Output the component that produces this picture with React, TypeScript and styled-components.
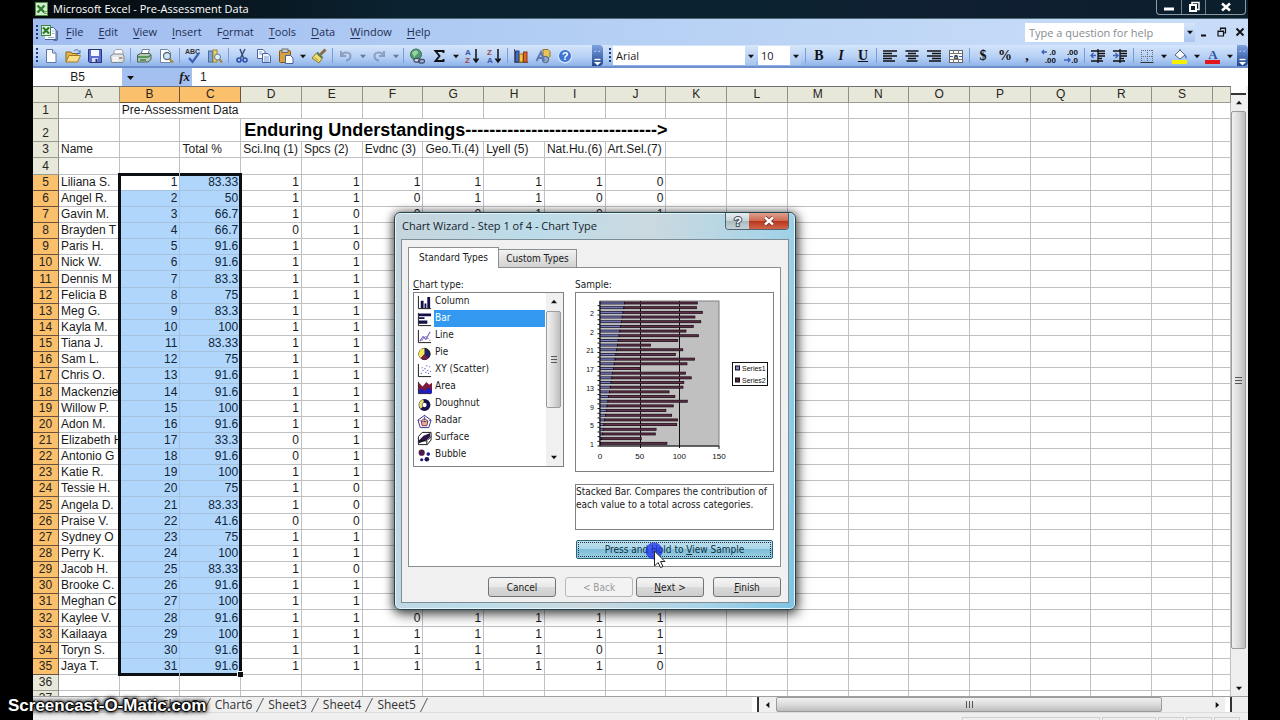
import React from "react";
import styled, { createGlobalStyle, css } from "styled-components";

const UI = `"Open Sans", "Noto Sans", sans-serif`;
const DIALOG = `"DejaVu Sans Condensed", "DejaVu Sans", sans-serif`;
const ARIAL = `"Liberation Sans", Arial, sans-serif`;

const GlobalStyle = createGlobalStyle`
  * { box-sizing: border-box; }
  html, body { margin: 0; background: #000; }
  body { font-family: ${UI}; font-size: 11px; color: #1a1a1a; overflow: hidden; }
  button, input, select { font: inherit; color: inherit; margin: 0; padding: 0; border: 0; border-radius: 0; background: none; }
`;

/* ---------- data ---------- */

type Student = { name: string; total: string; marks: string };

const students: Student[] = [
  { name: "Liliana S.", total: "83.33", marks: "1111110" },
  { name: "Angel R.", total: "50", marks: "1101100" },
  { name: "Gavin M.", total: "66.7", marks: "1000101" },
  { name: "Brayden T", total: "66.7", marks: "01" },
  { name: "Paris H.", total: "91.6", marks: "10" },
  { name: "Nick W.", total: "91.6", marks: "11" },
  { name: "Dennis M", total: "83.3", marks: "11" },
  { name: "Felicia B", total: "75", marks: "11" },
  { name: "Meg G.", total: "83.3", marks: "11" },
  { name: "Kayla M.", total: "100", marks: "11" },
  { name: "Tiana J.", total: "83.33", marks: "11" },
  { name: "Sam L.", total: "75", marks: "11" },
  { name: "Chris O.", total: "91.6", marks: "11" },
  { name: "Mackenzie", total: "91.6", marks: "11" },
  { name: "Willow P.", total: "100", marks: "11" },
  { name: "Adon M.", total: "91.6", marks: "11" },
  { name: "Elizabeth H", total: "33.3", marks: "01" },
  { name: "Antonio G", total: "91.6", marks: "01" },
  { name: "Katie R.", total: "100", marks: "11" },
  { name: "Tessie H.", total: "75", marks: "10" },
  { name: "Angela D.", total: "83.33", marks: "10" },
  { name: "Praise V.", total: "41.6", marks: "00" },
  { name: "Sydney O", total: "75", marks: "11" },
  { name: "Perry K.", total: "100", marks: "11" },
  { name: "Jacob H.", total: "83.33", marks: "10" },
  { name: "Brooke C.", total: "91.6", marks: "11" },
  { name: "Meghan C", total: "100", marks: "11" },
  { name: "Kaylee V.", total: "91.6", marks: "1101111" },
  { name: "Kailaaya", total: "100", marks: "1111111" },
  { name: "Toryn S.", total: "91.6", marks: "1111101" },
  { name: "Jaya T.", total: "91.6", marks: "1111110" },
];

const columns = "ABCDEFGHIJKLMNOPQRS".split("");
const understandings = ["Sci.Inq (1)", "Spcs (2)", "Evdnc (3)", "Geo.Ti.(4)", "Lyell (5)", "Nat.Hu.(6)", "Art.Sel.(7)"];

/* ---------- window frame ---------- */

const Window = styled.div`
  position: relative;
  margin: 0 32px 0 33px;
  height: 100vh;
  display: flex;
  flex-direction: column;
  background: #fff;
`;

const TitleBar = styled.header`
  height: 19px;
  flex: none;
  display: flex;
  align-items: center;
  gap: 5px;
  padding-left: 2px;
  background: linear-gradient(90deg, #05090c, #0b2230 30%, #0b2230 60%, #101f33 75%, #0a1e2b);
  border-bottom: 1px solid #4f6a72;
`;

const Title = styled.h1`
  margin: 0;
  flex: 1;
  font-size: 11px;
  line-height: 16px;
  font-weight: 400;
  color: #fff;
  white-space: nowrap;
`;

const Captions = styled.div`
  display: flex;
  align-self: flex-start;
  height: 15px;
  margin-right: 2px;
  border: 1px solid #8b9aa3;
  border-top: 0;
  border-radius: 0 0 4px 4px;
`;

const Caption = styled.button<{ $wide?: boolean }>`
  width: ${(p) => (p.$wide ? 40 : 24)}px;
  display: grid;
  place-items: center;
  & + & { border-left: 1px solid #6f7f88; }
`;

const MenuBar = styled.nav`
  height: 26px;
  flex: none;
  display: flex;
  align-items: center;
  background: linear-gradient(90deg, #a2bdf0, #b2cdf3 40%, #bfd7f6 70%, #c9ddf9);
`;

const Grip = styled.span`
  flex: none;
  width: 2px;
  height: 15px;
  margin: 0 2px 0 3px;
  background: repeating-linear-gradient(#1f3a78 0 2px, transparent 2px 4px);
`;

const Menus = styled.div`
  flex: 1;
  display: flex;
  gap: 15px;
  margin-left: 8px;
`;

const MenuItem = styled.button`
  line-height: 18px;
  color: #1d2f55;
  u { text-underline-offset: 2px; }
`;

const HelpBox = styled.div`
  display: flex;
  width: 170px;
  height: 19px;
  background: #fff;
  input { flex: 1; min-width: 0; padding-left: 4px; }
  input::placeholder { color: #868b92; opacity: 1; }
`;

const DropButton = styled.button<{ $w?: number }>`
  flex: none;
  width: ${(p) => p.$w ?? 11}px;
  align-self: stretch;
  display: grid;
  place-items: center;
  background: linear-gradient(#d6e5fb, #a9c6ef);
`;

const ChildCaptions = styled.div`
  display: flex;
  gap: 1px;
  button { width: 17px; height: 16px; display: grid; place-items: center; }
`;

/* ---------- toolbars ---------- */

const Toolbars = styled.div`
  height: 23px;
  flex: none;
  display: flex;
  background: linear-gradient(#d5e5fb, #b4cff5 60%, #8fb3ea);
  border-bottom: 2px solid #6d8fcb;
`;

const Toolbar = styled.div<{ $grow?: boolean }>`
  display: flex;
  align-items: center;
  ${(p) => p.$grow && css`flex: 1;`}
`;

const Tool = styled.button<{ $faded?: boolean }>`
  flex: none;
  width: 22px;
  height: 20px;
  display: grid;
  place-items: center;
  opacity: ${(p) => (p.$faded ? 0.45 : 1)};
`;

const ToolArrow = styled.button<{ $faded?: boolean }>`
  flex: none;
  width: 11px;
  height: 20px;
  display: grid;
  place-items: center;
  opacity: ${(p) => (p.$faded ? 0.45 : 1)};
`;

const Divider = styled.span`
  flex: none;
  width: 1px;
  height: 15px;
  margin: 0 2px;
  background: #7c9bd3;
`;

const Overflow = styled.button`
  flex: none;
  width: 11px;
  align-self: stretch;
  display: grid;
  place-items: end center;
  background: linear-gradient(#7ea3e2, #1f478f);
  border-radius: 0 4px 4px 0;
`;

const Spacer = styled.span<{ $w?: number }>`
  ${(p) => (p.$w ? css`flex: none; width: ${p.$w}px;` : css`flex: 1;`)}
`;

const Combo = styled.div<{ $w: number }>`
  flex: none;
  display: flex;
  width: ${(p) => p.$w}px;
  height: 19px;
  margin-right: 2px;
  background: #fff;
  select { flex: 1; min-width: 0; appearance: none; padding-left: 3px; }
`;

const Glyph = styled.span<{ $italic?: boolean; $line?: boolean }>`
  font-family: "Liberation Serif", serif;
  font-weight: 700;
  font-size: 14px;
  line-height: 16px;
  font-style: ${(p) => (p.$italic ? "italic" : "normal")};
  text-decoration: ${(p) => (p.$line ? "underline" : "none")};
  color: #111;
`;

/* ---------- formula bar ---------- */

const FormulaBar = styled.div`
  height: 18px;
  flex: none;
  display: flex;
  font-family: ${ARIAL};
  font-size: 12px;
  background: #a3c0f0;
  input { background: #fff; }
`;

const NameBox = styled.input`
  width: 89px;
  text-align: center;
`;

const FormulaTools = styled.div`
  width: 70px;
  display: flex;
  justify-content: space-between;
  align-items: center;
  padding: 0 2px 0 5px;
  button { height: 16px; }
`;

const Fx = styled.button`
  font-family: "Liberation Serif", serif;
  font-style: italic;
  font-weight: 700;
  font-size: 13px;
  line-height: 16px;
`;

const FormulaInput = styled.input`
  flex: 1;
  padding-left: 8px;
`;

/* ---------- sheet ---------- */

const Workspace = styled.main`
  flex: 1;
  min-height: 0;
  display: flex;
  background: #efefef;
`;

const SheetView = styled.div`
  flex: 1;
  min-width: 0;
  overflow: hidden;
  background: #fff;
`;

const Grid = styled.table`
  width: 100%;
  table-layout: fixed;
  border-collapse: separate;
  border-spacing: 0;
  border-top: 1px solid #6f7276;
  font-family: ${ARIAL};
  font-size: 12px;
  tbody tr { height: 16px; }
  tbody tr:nth-child(7n + 4) { height: 17px; }
  tbody tr:nth-child(2) { height: 23px; }
`;

const heading = css<{ $on?: boolean }>`
  padding: 0;
  font-weight: 400;
  text-align: center;
  line-height: 15px;
  color: #26241c;
  background: ${(p) => (p.$on ? "#fac06c" : "#e7e8da")};
  border-right: 1px solid ${(p) => (p.$on ? "#6b5340" : "#8e9187")};
  border-bottom: 1px solid ${(p) => (p.$on ? "#6b5340" : "#9a9c92")};
`;

const ColHead = styled.th<{ $on?: boolean }>`
  ${heading}
  height: 16px;
`;

const RowHead = styled.th<{ $on?: boolean }>`
  ${heading}
  vertical-align: bottom;
`;

type CellProps = { $right?: boolean; $sel?: boolean; $left?: boolean; $end?: boolean; $top?: boolean; $bottom?: boolean; $active?: boolean; $clip?: boolean };

const Cell = styled.td<CellProps>`
  position: relative;
  padding: 0 2px;
  line-height: 15px;
  vertical-align: bottom;
  white-space: nowrap;
  overflow: ${(p) => (p.$clip ? "hidden" : "visible")};
  text-align: ${(p) => (p.$right ? "right" : "left")};
  border-right: 1px solid #bfc0c2;
  border-bottom: 1px solid #bfc0c2;
  ${(p) =>
    p.$sel &&
    css`
      color: #10243a;
      background: ${p.$active ? "#fff" : "#b0d7fb"};
      border-color: #a5c3de;
      &::after {
        content: "";
        position: absolute;
        z-index: 1;
        inset: ${p.$top ? -2 : 0}px ${p.$end ? -2 : 0}px ${p.$bottom ? -2 : -1}px ${p.$left ? -2 : 0}px;
        border: 0 solid #0c0f14;
        border-left-width: ${p.$left ? 3 : 0}px;
        border-right-width: ${p.$end ? 3 : 0}px;
        border-top-width: ${p.$top ? 3 : 0}px;
        border-bottom-width: ${p.$bottom ? 3 : 0}px;
      }
    `}
  ${(p) =>
    p.$sel && p.$end && p.$bottom &&
    css`
      &::before {
        content: "";
        position: absolute;
        z-index: 2;
        right: -3px;
        bottom: -3px;
        width: 5px;
        height: 5px;
        background: #0c0f14;
        border: solid #fff;
        border-width: 1px 0 0 1px;
      }
    `}
`;

const BigCell = styled(Cell)`
  font-size: 18px;
  line-height: 22px;
  font-weight: 700;
  color: #000;
  padding-left: 3px;
`;

/* ---------- scroll bars and sheet tabs ---------- */

const VScroll = styled.div`
  flex: none;
  width: 17px;
  display: flex;
  flex-direction: column;
  align-items: stretch;
  padding-right: 2px;
  background: #efefef;
`;

const Split = styled.span<{ $vertical?: boolean }>`
  flex: none;
  background: #fff;
  ${(p) =>
    p.$vertical
      ? css`width: 7px; align-self: stretch; border-right: 2px solid #333;`
      : css`height: 9px; border-bottom: 2px solid #333;`}
`;

const ScrollButton = styled.button<{ $w?: number; $h?: number }>`
  flex: none;
  display: grid;
  place-items: center;
  width: ${(p) => (p.$w ? `${p.$w}px` : "auto")};
  height: ${(p) => (p.$h ? `${p.$h}px` : "auto")};
`;

const Thumb = styled.div<{ $vertical?: boolean; $grow: number }>`
  flex: ${(p) => p.$grow};
  display: grid;
  place-items: center;
  border: 1px solid #9b9b9b;
  border-radius: 2px;
  background: linear-gradient(${(p) => (p.$vertical ? "90deg" : "180deg")}, #f1f1f1, #dcdcdc 50%, #bdbdbd);
`;

const TrackRest = styled.span<{ $grow: number }>`
  flex: ${(p) => p.$grow};
`;

const TabStrip = styled.footer`
  height: 16px;
  flex: none;
  display: flex;
  background: #efefef;
  border-top: 1px solid #a0a0a0;
`;

const SheetTabs = styled.div`
  flex: 1;
  display: flex;
  align-items: center;
  padding-left: 128px;
  button { font-size: 12px; line-height: 14px; color: #333; white-space: nowrap; }
  svg { flex: none; margin: 0 4px; }
`;

const HScroll = styled.div`
  flex: none;
  width: 480px;
  display: flex;
  align-items: stretch;
  margin-right: 16px;
`;

const StatusBar = styled.div`
  height: 8px;
  flex: none;
  display: flex;
  justify-content: flex-end;
  gap: 2px;
  padding: 4px 8px 0 0;
  background: #efefef;
  border-top: 1px solid #dcdcdc;
`;

const Pane = styled.span<{ $w: number }>`
  width: ${(p) => p.$w}px;
  border: 1px solid #cfcfcf;
  border-bottom: 0;
`;

const Watermark = styled.div`
  position: absolute;
  left: 8px;
  bottom: 4px;
  font-family: ${ARIAL};
  font-size: 17px;
  line-height: 20px;
  font-weight: 700;
  color: #fff;
  text-shadow: 1px 0 1px #000, -1px 0 1px #000, 0 1px 1px #000, 0 -1px 1px #000, 0 0 4px #000, 0 0 4px #000, 0 0 6px #000;
`;

/* ---------- dialog ---------- */

const Dialog = styled.section`
  position: absolute;
  left: 361px;
  top: 212px;
  z-index: 2;
  width: 402px;
  padding: 0 6px 6px;
  border: 1px solid #23454f;
  border-radius: 6px;
  background: linear-gradient(100deg, #c6d5dc, #bcdcea 30%, #cbd9df 55%, #a9d4e8 80%, #7fc4e2);
  box-shadow: inset 0 0 0 1px #e6f3f8, 0 1px 10px 1px rgba(0, 0, 0, 0.6), 2px 5px 14px rgba(0, 0, 0, 0.4);
  font-family: ${DIALOG};
  font-size: 10px;
`;

const DialogTitle = styled.header`
  display: flex;
  height: 26px;
  h2 { flex: 1; margin: 0; padding-left: 1px; font-family: ${UI}; font-size: 11px; line-height: 26px; font-weight: 400; color: #16222a; }
`;

const DialogButtons = styled.div`
  display: flex;
  height: 17px;
  border: 1px solid #50636c;
  border-top: 0;
  border-radius: 0 0 4px 4px;
  overflow: hidden;
`;

const DialogCaption = styled.button<{ $close?: boolean }>`
  width: ${(p) => (p.$close ? 39 : 23)}px;
  display: grid;
  place-items: center;
  background: ${(p) => (p.$close ? "linear-gradient(#e0a090, #cf6a52 48%, #b8331c 50%, #d0664a)" : "linear-gradient(#e6eef1, #c7d3d9 48%, #a9b9c1 50%, #c4d3da)")};
`;

const DialogBody = styled.div`
  padding: 7px 7px 5px 6px;
  border: 1px solid #7d8d95;
  background: #f0f0f0;
`;

const Tabs = styled.div`
  display: flex;
  align-items: flex-end;
`;

const TabButton = styled.button<{ $on?: boolean }>`
  position: relative;
  z-index: ${(p) => (p.$on ? 1 : 0)};
  width: ${(p) => (p.$on ? 91 : 78)}px;
  height: ${(p) => (p.$on ? 21 : 18)}px;
  margin-bottom: ${(p) => (p.$on ? -1 : 0)}px;
  line-height: 16px;
  border: 1px solid #8a8f94;
  border-bottom: 0;
  border-left-width: ${(p) => (p.$on ? 1 : 0)}px;
  background: ${(p) => (p.$on ? "#fff" : "linear-gradient(#f2f2f2, #d2d2d2)")};
  white-space: nowrap;
`;

const TabPanel = styled.div`
  display: flex;
  gap: 11px;
  height: 300px;
  padding: 9px 6px 6px 4px;
  border: 1px solid #8a8f94;
  background: #fff;
`;

const LeftPane = styled.div`
  flex: none;
  width: 151px;
`;

const RightPane = styled.div`
  flex: 1;
  min-width: 0;
  display: flex;
  flex-direction: column;
`;

const FieldLabel = styled.div`
  height: 15px;
  line-height: 15px;
  white-space: nowrap;
`;

const TypeList = styled.div`
  display: flex;
  height: 175px;
  border: 1px solid #7f8184;
`;

const Types = styled.div`
  flex: 1;
  display: flex;
  flex-direction: column;
  overflow: hidden;
`;

const TypeRow = styled.label<{ $on?: boolean }>`
  flex: none;
  display: flex;
  align-items: flex-end;
  height: 17px;
  padding: 0 1px 0 3px;
  input { position: absolute; opacity: 0; pointer-events: none; }
  span {
    flex: 1;
    margin-left: 2px;
    padding-left: 1px;
    height: 17px;
    line-height: 15px;
    color: ${(p) => (p.$on ? "#fff" : "#1a1a1a")};
    background: ${(p) => (p.$on ? "#3399f0" : "transparent")};
  }
`;

const ListScroll = styled.div`
  width: 17px;
  display: flex;
  flex-direction: column;
  padding-right: 2px;
  background: #f0f0f0;
`;

const SampleBox = styled.div`
  height: 180px;
  border: 1px solid #7f8184;
  svg { display: block; }
`;

const Description = styled.p`
  height: 46px;
  margin: 12px 0 10px;
  line-height: 13px;
  border: 1px solid #7f8184;
  white-space: nowrap;
`;

const HoldButton = styled.button`
  height: 19px;
  margin: 0 1px;
  line-height: 17px;
  border: 1px solid #2f6378;
  border-radius: 2px;
  outline: 1px dotted #234;
  outline-offset: -3px;
  background: linear-gradient(#c3e2ef, #a6d5e8 48%, #7ebdd8 50%, #9bd0e4);
  color: #12303c;
  white-space: nowrap;
`;

const Actions = styled.div`
  display: flex;
  justify-content: flex-end;
  gap: 9px;
  margin-top: 10px;
`;

const StepPair = styled.div`
  display: flex;
  gap: 3px;
`;

const Push = styled.button`
  width: 68px;
  height: 20px;
  line-height: 17px;
  border: 1px solid #70757a;
  border-radius: 3px;
  background: linear-gradient(#f4f4f4, #e9e9e9 48%, #dadada 50%, #cdcdcd);
  &:disabled { color: #9a9a9a; border-color: #b6b9bb; background: #f3f3f3; }
`;

const Pointer = styled.svg`
  position: absolute;
  left: 250px;
  top: 327px;
  pointer-events: none;
`;

/* ---------- icons ---------- */

const Arrow = ({ dir = "down", size = 7, color = "#111" }: { dir?: "down" | "up" | "left" | "right"; size?: number; color?: string }) => {
  const shapes = { down: "0,2 7,2 3.5,6", up: "0,5 7,5 3.5,1", left: "5,0 5,7 1,3.5", right: "2,0 2,7 6,3.5" };
  return (
    <svg width={size} height={size} viewBox="0 0 7 7" aria-hidden="true">
      <polygon points={shapes[dir]} fill={color} />
    </svg>
  );
};

const Icon = ({ children, size = 16 }: { children: React.ReactNode; size?: number }) => (
  <svg width={size} height={size} viewBox="0 0 16 16" fill="none" aria-hidden="true">{children}</svg>
);

const ExcelIcon = () => (
  <svg width="13" height="14" viewBox="0 0 13 14" aria-hidden="true">
    <rect x="0.5" y="0.5" width="12" height="13" fill="#d5ebcf" stroke="#4c8a45" />
    <path d="M2.5 3.5l7 7M9.500 3.5l-7 7" stroke="#2c7d2f" strokeWidth="2.4" />
    <path d="M9 9.500h3M9 11.500h3" stroke="#6ea468" />
  </svg>
);

const BookIcon = () => (
  <svg width="18" height="17" viewBox="0 0 18 17" fill="none" aria-hidden="true">
    <path d="M6 3.500h7.500l2.500 2.500v9.500H5" fill="#fff" stroke="#44659c" />
    <path d="M13.500 16.200h3.700V6.500" stroke="#3a4d75" />
    <path d="M12 7h2.500M12 9.500h2.500M8 13.500h6.500" stroke="#9db3da" />
    <rect x="1.500" y="1.500" width="9" height="10" fill="#dcefd9" stroke="#3f8a3b" />
    <path d="M3 3.500l6 6M9 3.500l-6 6" stroke="#23782a" strokeWidth="2" />
  </svg>
);

const icons: Record<string, React.ReactNode> = {
  New: <><path d="M3.500 1.500h6l3.500 3.500v9.500h-9.500z" fill="#fff" stroke="#5b77a8" /><path d="M9.500 1.500v3.500h3.500" stroke="#5b77a8" fill="#dce8fb" /></>,
  Open: <><path d="M1 14V4h5l1 1.500h5V8" fill="#e3b54a" stroke="#8e6a1c" /><path d="M1 14l3-6.500h11.500L12.500 14z" fill="#fbe08a" stroke="#a27a22" /><path d="M9 3c2-2 4-1.500 5 .5l1-1v3h-3l1-1" stroke="#3d6bb0" /></>,
  Save: <><path d="M1.500 1.500h13v13h-12l-1-1z" fill="#5a6fd0" stroke="#28337c" /><rect x="4" y="2" width="8" height="6" fill="#f3f6ff" /><rect x="5" y="10" width="6" height="4" fill="#d4dcf5" /><rect x="8.500" y="11" width="2" height="3" fill="#28337c" /></>,
  Permission: <><path d="M5 6V3.500l2-2h5.500l1.500 1.500V9" fill="#fafafa" stroke="#98a0ac" /><path d="M1.500 8l3-2h9l1.500 2v5l-2 1.500H2.500z" fill="#e2e3e4" stroke="#808790" /><path d="M3.500 10h6M3.500 12.500h6" stroke="#fff" strokeWidth="1.400" /><path d="M10 10h3.500" stroke="#9a7f58" strokeWidth="1.400" /></>,
  Print: <><path d="M5 6l1.500-4.500h7L12 6z" fill="#fff" stroke="#71809a" /><path d="M1.500 7l3-1.500h9.500l1 1.500v4.500l-3 2.500h-10.500z" fill="#b9c7b6" stroke="#4c5d55" /><path d="M2 9h10l3-2M4 12h6" stroke="#3a8740" strokeWidth="1.400" /></>,
  "Print Preview": <><path d="M2.500 1.500h7l3 3v10h-10z" fill="#fff" stroke="#6e82a6" /><circle cx="9" cy="8" r="3.500" fill="#cfe6f7" stroke="#5d6f80" strokeWidth="1.300" /><path d="M11.500 11l3.500 3.500" stroke="#b1893a" strokeWidth="2.200" /></>,
  Spelling: <><text x="0" y="6" fontSize="7" fontWeight="700" fontFamily="Liberation Sans" fill="#333">ABC</text><path d="M4 10l3.500 4L14 5" stroke="#3a62b8" strokeWidth="2.200" /></>,
  Research: <><rect x="1.500" y="3" width="4" height="11" fill="#7da4d8" stroke="#4d6ba0" /><rect x="6" y="2" width="4" height="12" fill="#e6d272" stroke="#9c8a33" /><circle cx="10.500" cy="9" r="3" fill="#dff0fa" stroke="#60788e" /><path d="M12.500 11.500l2.500 3" stroke="#a2823c" strokeWidth="2" /></>,
  Cut: <><path d="M6 1l3.500 9M11 1L6.500 10" stroke="#3b4c7c" strokeWidth="1.500" /><circle cx="5" cy="12" r="2" stroke="#2f50a8" strokeWidth="1.600" /><circle cx="11" cy="12" r="2" stroke="#2f50a8" strokeWidth="1.600" /></>,
  Copy: <><path d="M1.500 1.500h5.500l2 2v7h-7.500z" fill="#fff" stroke="#4463a0" /><path d="M6.500 5.500h5.500l2.500 2.500v6.500h-8z" fill="#eef4ff" stroke="#4463a0" /><path d="M8 9h5M8 11h5M8 13h5M3 4h3M3 6h3" stroke="#7e9bd1" /></>,
  Paste: <><rect x="1.500" y="2.500" width="11" height="12" rx="1" fill="#d9a13d" stroke="#80591a" /><rect x="4" y="1" width="6" height="3.500" fill="#c9ccd2" stroke="#6d6d6d" /><path d="M7.500 7.500h5l2.500 2.500v5.500h-7.500z" fill="#fff" stroke="#4463a0" /></>,
  "Format Painter": <><path d="M14.500 1.500l-5 5" stroke="#8a6a3a" strokeWidth="2.800" /><path d="M5.500 5l5.500 5.500-3 4.500-7-5z" fill="#f0dc71" stroke="#8e7a28" /><path d="M6 4.500l5.500 5.500" stroke="#5b7a56" strokeWidth="2.200" /><path d="M3.500 9.500l4 3" stroke="#b39a3a" /></>,
  Undo: <path d="M3 3v5h5M3.500 7.500C6 3 13 4 12.500 8.500c0 2-2 4-4.500 4" stroke="#54607a" strokeWidth="2" />,
  Redo: <path d="M13 3v5H8M12.500 7.500C10 3 3 4 3.500 8.500c0 2 2 4 4.500 4" stroke="#54607a" strokeWidth="2" />,
  Hyperlink: <><circle cx="7" cy="6.500" r="5.500" fill="#4f9a72" stroke="#38705a" /><path d="M3 5c2-3 5-3 6-1s-4 3-3 6" fill="#97d4a0" /><rect x="5" y="10.500" width="6" height="3.500" rx="1.700" stroke="#48536a" strokeWidth="1.300" fill="#dfe7f2" /><rect x="9.500" y="11.500" width="6" height="3.500" rx="1.700" stroke="#48536a" strokeWidth="1.300" /></>,
  AutoSum: <path d="M12.500 5V3h-8L8.500 8l-4 5h8V11" stroke="#111" strokeWidth="1.900" />,
  "Sort Ascending": <><text x="1" y="7" fontSize="8" fontWeight="700" fontFamily="Liberation Sans" fill="#3958a8">A</text><text x="1" y="15" fontSize="8" fontWeight="700" fontFamily="Liberation Sans" fill="#9a4a4a">Z</text><path d="M12 1v12M9.500 10.500L12 14l2.500-3.500" stroke="#111" strokeWidth="1.500" /></>,
  "Sort Descending": <><text x="1" y="7" fontSize="8" fontWeight="700" fontFamily="Liberation Sans" fill="#9a4a4a">Z</text><text x="1" y="15" fontSize="8" fontWeight="700" fontFamily="Liberation Sans" fill="#3958a8">A</text><path d="M12 1v12M9.500 10.500L12 14l2.500-3.500" stroke="#111" strokeWidth="1.500" /></>,
  "Chart Wizard": <><path d="M1.500 1v13.500H15" stroke="#5a5a5a" /><rect x="2.500" y="3" width="3.500" height="11" fill="#3f68c8" stroke="#23407f" /><rect x="6.500" y="6" width="3.500" height="8" fill="#f2c93d" stroke="#957719" /><rect x="10.500" y="4" width="3.500" height="10" fill="#e0632e" stroke="#8c3510" /></>,
  Drawing: <><path d="M8 1.500h5l2 2v5l-2 1.500H8z" fill="#e9c25c" stroke="#8c712a" /><circle cx="10.500" cy="11.500" r="3.200" fill="#92a6c6" stroke="#52607c" /><path d="M1.500 13L6 4l3 9M3 10h5" stroke="#5d77b2" strokeWidth="2" /></>,
  Help: <><circle cx="8" cy="8" r="6.700" fill="#3d73d3" stroke="#cfe0fb" strokeWidth="1.400" /><text x="8" y="12" textAnchor="middle" fontSize="11" fontWeight="700" fontFamily="Liberation Sans" fill="#fff">?</text></>,
  "Align Left": <path d="M1 3h14M1 5.500h9M1 8h14M1 10.500h9M1 13h12" stroke="#111" strokeWidth="1.300" />,
  Center: <path d="M1.500 3h13M4 5.500h8M1.500 8h13M4 10.500h8M2.500 13h11" stroke="#111" strokeWidth="1.300" />,
  "Align Right": <path d="M1 3h14M6 5.500h9M1 8h14M6 10.500h9M3 13h12" stroke="#111" strokeWidth="1.300" />,
  "Merge and Center": <><rect x="1.500" y="2.500" width="13" height="12" fill="#fff" stroke="#666" /><path d="M1.500 5.500h13M1.500 11.500h13M5.500 2.500v3M10.500 2.500v3M5.500 11.500v3M10.500 11.500v3" stroke="#777" /><path d="M2 8.500h3M11 8.500h3" stroke="#3a62b8" /><text x="8" y="11" textAnchor="middle" fontSize="8" fontWeight="700" fontFamily="Liberation Sans" fill="#111">a</text></>,
  "Increase Decimal": <><path d="M1 4h5M3 2L1 4l2 2" stroke="#3a62b8" strokeWidth="1.300" /><text x="15" y="7" textAnchor="end" fontSize="8" fontWeight="700" fontFamily="Liberation Sans" fill="#111">.0</text><text x="15" y="15" textAnchor="end" fontSize="8" fontWeight="700" fontFamily="Liberation Sans" fill="#111">.00</text></>,
  "Decrease Decimal": <><text x="15" y="7" textAnchor="end" fontSize="8" fontWeight="700" fontFamily="Liberation Sans" fill="#111">.00</text><path d="M1 12h6M5 10l2 2-2 2" stroke="#3a62b8" strokeWidth="1.300" /><text x="15" y="15" textAnchor="end" fontSize="8" fontWeight="700" fontFamily="Liberation Sans" fill="#111">.0</text></>,
  "Decrease Indent": <><path d="M1 3h14M8 5.500h7M8 8h7M8 10.500h4M1 13h12M8 1v14" stroke="#111" strokeWidth="1.300" /><path d="M1 7.500h5M3.500 5L1 7.500 3.500 10" stroke="#3a62b8" strokeWidth="1.400" /></>,
  "Increase Indent": <><path d="M1 3h14M8 5.500h7M8 8h7M8 10.500h4M1 13h12M8 1v14" stroke="#111" strokeWidth="1.300" /><path d="M1 7.500h5M3.500 5L6 7.500 3.500 10" stroke="#3a62b8" strokeWidth="1.400" /></>,
  Borders: <><path d="M2 2.500h12M2 8.500h12M2.500 2v12M8.500 2v12M13.500 2v12" stroke="#667" strokeDasharray="1 1" /><path d="M1.500 14.500h13" stroke="#333" /></>,
  "Fill Color": <><path d="M3 7l5-5 5 5-5 4z" fill="#f4f6fa" stroke="#56657f" /><path d="M8 2V1" stroke="#56657f" /><path d="M12.500 6c2 1 2.500 3 2 5-1.500-1-2-3-2-5z" fill="#4c72bd" /><rect x="0" y="12" width="15" height="4" fill="#f7f000" /></>,
  "Font Color": <><text x="8" y="11" textAnchor="middle" fontSize="13" fontWeight="700" fontFamily="Liberation Serif" fill="#31539c">A</text><rect x="0" y="12" width="15" height="4" fill="#e0161b" /></>,
};

const typeIcons: Record<string, React.ReactNode> = {
  Column: <><path d="M1.500 1v13.500H15" stroke="#111" /><path d="M4 14V6h3v8zM8 14V9h2v5zM11 14V2h3v12z" fill="#12104a" /></>,
  Bar: <><path d="M1.500 1v13.500H15" stroke="#111" /><path d="M2 1.500h13v3H2zM2 5.500h6v2H2zM2 9h9v3.500H2z" fill="#12104a" /></>,
  Line: <><path d="M1.500 1v13.500H15" stroke="#111" /><path d="M3 13l3.500-5 3 3L14 3" stroke="#6a62c8" strokeWidth="1.200" /><path d="M5 12.500l4-5 5 5" stroke="#7c3a78" strokeDasharray="2 1" /></>,
  Pie: <><circle cx="8" cy="8.500" r="6" fill="#23206b" stroke="#111" /><path d="M8 8.500V2.500a6 6 0 0 0-4 10.500z" fill="#f5ea55" /><path d="M8 8.500l-4 4.500a6 6 0 0 0 8 0z" fill="#7a1c4a" /></>,
  "XY (Scatter)": <><path d="M1.500 1v13.500H15" stroke="#111" /><path d="M4 11h1M6 8h1M5 5h1M9 10h1M8 6h1M11 8h1M13 4h1M12 11h1M10 3h1M14 9h1" stroke="#4a4cb0" strokeWidth="1.200" /></>,
  Area: <><path d="M1.500 2v12.500H15" stroke="#111" /><path d="M2 14V3l4 4 4-5 3 3 3-2v11z" fill="#7c1a3c" /><path d="M2 14v-3l3-2 3 3 4-4 4 3v3z" fill="#1a20c0" /></>,
  Doughnut: <><circle cx="8" cy="8.500" r="4.300" stroke="#15124d" strokeWidth="4" /><path d="M7 4.200a4.300 4.300 0 0 0-2 7.300" stroke="#f0e66a" strokeWidth="3" /></>,
  Radar: <><path d="M8 1.500l7 5-2.500 8h-9L1 6.500z" stroke="#2a2a90" /><path d="M8 4.500l3.500 3-1 5h-5l-1-5z" fill="#e6b48e" stroke="#7c2a4a" /><path d="M8 1.500v7M1 6.500l7 2 7-2" stroke="#2a2a90" strokeDasharray="1 1" /></>,
  Surface: <><path d="M1.500 6l4-4.500h9.500v8l-4 5H1.500z" fill="#fff" stroke="#111" /><path d="M2 10l5-5 7-3v4l-4 4-8 3z" fill="#2b1748" /><path d="M1.500 10.500h9v4M11 10l4-4" stroke="#111" /></>,
  Bubble: <><circle cx="5" cy="5" r="3.300" fill="#4d1b4a" /><circle cx="12" cy="6.500" r="1.900" fill="#1a1a8a" /><circle cx="5" cy="12.500" r="1.700" fill="#1a1a8a" /><circle cx="10.500" cy="12" r="2.500" fill="#1b1550" /></>,
};

const ToolIcon = ({ name, faded }: { name: string; faded?: boolean }) => (
  <Tool aria-label={name} $faded={faded}><Icon>{icons[name]}</Icon></Tool>
);

const More = ({ label, faded }: { label: string; faded?: boolean }) => (
  <ToolArrow aria-label={label} $faded={faded}><Arrow size={6} /></ToolArrow>
);

const OverflowMark = () => (
  <svg width="9" height="20" viewBox="0 0 9 20" fill="none" aria-hidden="true">
    <path d="M1.500 6l1.500-1.500M5.500 6L7 4.500" stroke="#e8f0ff" />
    <path d="M1.500 13.500h6" stroke="#fff" strokeWidth="1.400" />
    <path d="M1 16h7l-3.500 3.500z" fill="#fff" />
  </svg>
);

/* ---------- sample chart ---------- */

const SampleChart = () => {
  const x0 = 24;
  const y0 = 8;
  const height = 145;
  const step = height / students.length;
  const scale = 119 / 150;
  const labels = ["1", "5", "9", "13", "17", "21", "2", "2"];
  return (
    <svg width="100%" height="178" viewBox="0 0 197 178" fontFamily="Liberation Sans" fontSize="7" fill="#111" role="img" aria-label="Stacked bar sample">
      <rect x={x0} y={y0} width="119" height={height} fill="#c0c0c0" stroke="#808080" />
      {[50, 100].map((v) => (
        <path key={v} d={`M${Math.round(x0 + v * scale) + 0.5} ${y0}v${height + 2}`} stroke="#111" />
      ))}
      {students.map((s, i) => {
        const y = y0 + height - (i + 1) * step + 1;
        const first = (i + 1) * scale;
        return (
          <g key={s.name}>
            <rect x={x0} y={y} width={first} height="2" fill="#7c7cc4" stroke="#16162e" strokeWidth="0.800" />
            <rect x={x0 + first} y={y} width={Number(s.total) * scale} height="2" fill="#64304c" stroke="#1a0c14" strokeWidth="0.800" />
          </g>
        );
      })}
      <path d={`M${x0} ${y0}v${height}h119v3`} fill="none" stroke="#111" />
      {students.map((s, i) => (
        <path key={s.name} d={`M${x0 - 2.5} ${y0 + height - i * step}h2.500`} stroke="#111" />
      ))}
      {labels.map((t, i) => (
        <text key={i} x="18" y={y0 + height - i * 4 * step + 1} textAnchor="end">{t}</text>
      ))}
      {[0, 50, 100, 150].map((v) => (
        <text key={v} x={x0 + v * scale} y="166" textAnchor="middle" fontSize="8">{v}</text>
      ))}
      <rect x="156.500" y="69.500" width="35" height="23" fill="#fff" stroke="#111" />
      <rect x="159.500" y="73" width="4" height="4" fill="#8888cc" stroke="#111" />
      <rect x="159.500" y="85" width="4" height="4" fill="#5a2440" stroke="#111" />
      <text x="166" y="78" fontSize="7">Series1</text>
      <text x="166" y="90" fontSize="7">Series2</text>
    </svg>
  );
};

/* ---------- parts ---------- */

const Menu = ({ text, at = 0 }: { text: string; at?: number }) => (
  <MenuItem>{text.slice(0, at)}<u>{text[at]}</u>{text.slice(at + 1)}</MenuItem>
);

const Blank = ({ from, to }: { from: number; to: number }) => (
  <>{Array.from({ length: to - from }, (_, i) => <Cell key={i} />)}</>
);

const Sheet = () => (
  <Grid>
    <colgroup>
      <col width="26" />
      {columns.map((c) => <col key={c} />)}
      <col width="18" />
    </colgroup>
    <thead>
      <tr>
        <ColHead />
        {columns.map((c) => <ColHead key={c} $on={c === "B" || c === "C"}>{c}</ColHead>)}
        <ColHead />
      </tr>
    </thead>
    <tbody>
      <tr>
        <RowHead>1</RowHead>
        <Cell />
        <Cell colSpan={3}>Pre-Assessment Data</Cell>
        <Blank from={4} to={20} />
      </tr>
      <tr>
        <RowHead>2</RowHead>
        <Blank from={0} to={3} />
        <BigCell colSpan={8}>{"Enduring Understandings" + "-".repeat(32) + ">"}</BigCell>
        <Blank from={11} to={20} />
      </tr>
      <tr>
        <RowHead>3</RowHead>
        <Cell>Name</Cell>
        <Cell />
        <Cell>Total %</Cell>
        {understandings.map((u) => <Cell key={u}>{u}</Cell>)}
        <Blank from={10} to={20} />
      </tr>
      <tr>
        <RowHead>4</RowHead>
        <Blank from={0} to={20} />
      </tr>
      {students.map((s, i) => {
        const top = i === 0;
        const bottom = i === students.length - 1;
        return (
          <tr key={s.name}>
            <RowHead $on>{i + 5}</RowHead>
            <Cell $clip>{s.name}</Cell>
            <Cell $right $sel $left $top={top} $bottom={bottom} $active={top}>{i + 1}</Cell>
            <Cell $right $sel $end $top={top} $bottom={bottom}>{s.total}</Cell>
            {understandings.map((u, k) => <Cell key={u} $right>{s.marks[k]}</Cell>)}
            <Blank from={10} to={20} />
          </tr>
        );
      })}
      {[36, 37].map((n) => (
        <tr key={n}>
          <RowHead>{n}</RowHead>
          <Blank from={0} to={20} />
        </tr>
      ))}
    </tbody>
  </Grid>
);

const Wizard = () => (
  <Dialog role="dialog" aria-label="Chart Wizard">
    <DialogTitle>
      <h2>Chart Wizard - Step 1 of 4 - Chart Type</h2>
      <DialogButtons>
        <DialogCaption aria-label="Help">
          <svg width="12" height="14" viewBox="0 0 12 14" aria-hidden="true">
            <text x="6" y="12" textAnchor="middle" fontSize="13" fontWeight="700" fontFamily="Liberation Sans" fill="#fff" stroke="#44525a" strokeWidth="2" paintOrder="stroke">?</text>
          </svg>
        </DialogCaption>
        <DialogCaption $close aria-label="Close">
          <svg width="12" height="10" viewBox="0 0 12 10" aria-hidden="true">
            <path d="M2 1.500l8 7M10 1.500l-8 7" stroke="#6b2a20" strokeWidth="4" />
            <path d="M2 1.500l8 7M10 1.500l-8 7" stroke="#fff" strokeWidth="2.400" />
          </svg>
        </DialogCaption>
      </DialogButtons>
    </DialogTitle>
    <DialogBody>
      <Tabs>
        <TabButton $on>Standard Types</TabButton>
        <TabButton>Custom Types</TabButton>
      </Tabs>
      <TabPanel>
        <LeftPane>
          <FieldLabel id="chart-type"><u>C</u>hart type:</FieldLabel>
          <TypeList>
            <Types role="radiogroup" aria-labelledby="chart-type">
              {Object.keys(typeIcons).map((t) => (
                <TypeRow key={t} $on={t === "Bar"}>
                  <input type="radio" name="type" defaultChecked={t === "Bar"} />
                  <Icon size={15}>{typeIcons[t]}</Icon>
                  <span>{t}</span>
                </TypeRow>
              ))}
            </Types>
            <ListScroll>
              <ScrollButton $h={18} aria-label="Scroll up"><Arrow dir="up" size={6} /></ScrollButton>
              <Thumb $vertical $grow={96}>
                <svg width="6" height="8" viewBox="0 0 6 8" aria-hidden="true"><path d="M0 1.500h6M0 4.500h6M0 7.500h6" stroke="#555" /></svg>
              </Thumb>
              <TrackRest $grow={41} />
              <ScrollButton $h={18} aria-label="Scroll down"><Arrow size={6} /></ScrollButton>
            </ListScroll>
          </TypeList>
        </LeftPane>
        <RightPane>
          <FieldLabel>Sample:</FieldLabel>
          <SampleBox><SampleChart /></SampleBox>
          <Description>Stacked Bar. Compares the contribution of<br />each value to a total across categories.</Description>
          <HoldButton>Press and Hold to <u>V</u>iew Sample</HoldButton>
        </RightPane>
      </TabPanel>
      <Actions>
        <Push>Cancel</Push>
        <StepPair>
          <Push disabled>&lt; Back</Push>
          <Push><u>N</u>ext &gt;</Push>
        </StepPair>
        <Push><u>F</u>inish</Push>
      </Actions>
    </DialogBody>
    <Pointer width="24" height="30" viewBox="0 0 24 30" aria-hidden="true">
      <circle cx="9" cy="11" r="8.500" fill="#1d2fe8" fillOpacity="0.750" />
      <path d="M9.500 11v15l3.500-3.500 2.500 5 2.500-1-2.500-5h4.500z" fill="#fff" stroke="#222" />
    </Pointer>
  </Dialog>
);

export default function App() {
  return (
    <>
      <GlobalStyle />
      <Window>
        <TitleBar>
          <ExcelIcon />
          <Title>Microsoft Excel - Pre-Assessment Data</Title>
          <Captions>
            <Caption aria-label="Minimize"><svg width="12" height="12" viewBox="0 0 12 12"><path d="M1 8h10" stroke="#fff" strokeWidth="3" /></svg></Caption>
            <Caption aria-label="Restore"><svg width="12" height="12" viewBox="0 0 12 12" fill="none"><path d="M4 3V1.500h7v7H9" stroke="#fff" strokeWidth="1.500" /><rect x="2" y="4" width="6" height="6" stroke="#fff" strokeWidth="2" /></svg></Caption>
            <Caption $wide aria-label="Close"><svg width="12" height="12" viewBox="0 0 12 12"><path d="M2 2.500l8 7M10 2.500l-8 7" stroke="#fff" strokeWidth="2.500" /></svg></Caption>
          </Captions>
        </TitleBar>

        <MenuBar>
          <Grip />
          <BookIcon />
          <Menus>
            <Menu text="File" />
            <Menu text="Edit" />
            <Menu text="View" />
            <Menu text="Insert" />
            <Menu text="Format" at={1} />
            <Menu text="Tools" />
            <Menu text="Data" />
            <Menu text="Window" />
            <Menu text="Help" />
          </Menus>
          <HelpBox>
            <input aria-label="Type a question for help" placeholder="Type a question for help" />
            <DropButton aria-label="Help topics"><Arrow size={6} /></DropButton>
          </HelpBox>
          <ChildCaptions>
            <button aria-label="Minimize workbook"><svg width="10" height="10" viewBox="0 0 10 10"><path d="M2 8.500h5" stroke="#111" strokeWidth="2" /></svg></button>
            <button aria-label="Restore workbook"><svg width="10" height="10" viewBox="0 0 10 10" fill="none"><path d="M3.500 3V1h5v5h-2M3.500 1.500h5" stroke="#111" strokeWidth="1.200" /><path d="M1 4h5.500v5H1zM1 4.500h5" stroke="#111" strokeWidth="1.200" /></svg></button>
            <button aria-label="Close workbook"><svg width="10" height="10" viewBox="0 0 10 10"><path d="M1.500 1.500l7 7M8.500 1.500l-7 7" stroke="#111" strokeWidth="1.800" /></svg></button>
          </ChildCaptions>
        </MenuBar>

        <Toolbars>
          <Toolbar>
            <Grip />
            <ToolIcon name="New" />
            <ToolIcon name="Open" />
            <ToolIcon name="Save" />
            <ToolIcon name="Permission" />
            <Divider />
            <ToolIcon name="Print" />
            <ToolIcon name="Print Preview" />
            <Divider />
            <ToolIcon name="Spelling" />
            <ToolIcon name="Research" />
            <Divider />
            <ToolIcon name="Cut" />
            <ToolIcon name="Copy" />
            <ToolIcon name="Paste" />
            <More label="Paste options" />
            <ToolIcon name="Format Painter" />
            <Divider />
            <ToolIcon name="Undo" faded />
            <More label="Undo list" faded />
            <ToolIcon name="Redo" faded />
            <More label="Redo list" faded />
            <Divider />
            <ToolIcon name="Hyperlink" />
            <ToolIcon name="AutoSum" />
            <More label="AutoSum options" />
            <ToolIcon name="Sort Ascending" />
            <ToolIcon name="Sort Descending" />
            <Divider />
            <ToolIcon name="Chart Wizard" />
            <ToolIcon name="Drawing" />
            <ToolIcon name="Help" />
            <Spacer $w={16} />
            <Overflow aria-label="Standard toolbar options"><OverflowMark /></Overflow>
          </Toolbar>
          <Toolbar $grow>
            <Spacer $w={3} />
            <Grip />
            <Combo $w={143}>
              <select aria-label="Font"><option>Arial</option></select>
              <DropButton aria-label="Show fonts"><Arrow size={6} /></DropButton>
            </Combo>
            <Combo $w={43}>
              <select aria-label="Font size"><option>10</option></select>
              <DropButton aria-label="Show sizes"><Arrow size={6} /></DropButton>
            </Combo>
            <Divider />
            <Tool aria-label="Bold"><Glyph>B</Glyph></Tool>
            <Tool aria-label="Italic"><Glyph $italic>I</Glyph></Tool>
            <Tool aria-label="Underline"><Glyph $line>U</Glyph></Tool>
            <Divider />
            <ToolIcon name="Align Left" />
            <ToolIcon name="Center" />
            <ToolIcon name="Align Right" />
            <ToolIcon name="Merge and Center" />
            <Divider />
            <Tool aria-label="Currency Style"><Glyph>$</Glyph></Tool>
            <Tool aria-label="Percent Style"><Glyph>%</Glyph></Tool>
            <Tool aria-label="Comma Style"><Glyph>,</Glyph></Tool>
            <ToolIcon name="Increase Decimal" />
            <ToolIcon name="Decrease Decimal" />
            <Divider />
            <ToolIcon name="Decrease Indent" />
            <ToolIcon name="Increase Indent" />
            <Divider />
            <ToolIcon name="Borders" />
            <More label="Border styles" />
            <ToolIcon name="Fill Color" />
            <More label="Fill colors" />
            <ToolIcon name="Font Color" />
            <More label="Font colors" />
            <Spacer />
            <Overflow aria-label="Formatting toolbar options"><OverflowMark /></Overflow>
          </Toolbar>
        </Toolbars>

        <FormulaBar>
          <NameBox aria-label="Name box" defaultValue="B5" />
          <FormulaTools>
            <button aria-label="Named ranges"><Arrow /></button>
            <Fx aria-label="Insert function">fx</Fx>
          </FormulaTools>
          <FormulaInput aria-label="Formula" defaultValue="1" />
        </FormulaBar>

        <Workspace>
          <SheetView><Sheet /></SheetView>
          <VScroll>
            <Split />
            <ScrollButton $h={16} aria-label="Scroll up"><Arrow dir="up" size={6} /></ScrollButton>
            <Thumb $vertical $grow={538}>
              <svg width="7" height="8" viewBox="0 0 7 8" aria-hidden="true"><path d="M0 1.500h7M0 4.500h7M0 7.500h7" stroke="#555" /></svg>
            </Thumb>
            <TrackRest $grow={31} />
            <ScrollButton $h={16} aria-label="Scroll down"><Arrow size={6} /></ScrollButton>
          </VScroll>
        </Workspace>

        <TabStrip>
          <SheetTabs>
            {["Chart5", "Chart6", "Sheet3", "Sheet4", "Sheet5"].map((t) => (
              <React.Fragment key={t}>
                <button>{t}</button>
                <svg width="8" height="14" viewBox="0 0 8 14" aria-hidden="true"><path d="M0.500 14L7.500 0" stroke="#555" /></svg>
              </React.Fragment>
            ))}
          </SheetTabs>
          <HScroll>
            <Split $vertical />
            <ScrollButton $w={17} aria-label="Scroll left"><Arrow dir="left" size={6} /></ScrollButton>
            <Thumb $grow={385}>
              <svg width="8" height="7" viewBox="0 0 8 7" aria-hidden="true"><path d="M1.500 0v7M4.500 0v7M7.500 0v7" stroke="#555" /></svg>
            </Thumb>
            <TrackRest $grow={46} />
            <ScrollButton $w={17} aria-label="Scroll right"><Arrow dir="right" size={6} /></ScrollButton>
            <Split $vertical />
          </HScroll>
        </TabStrip>
        <StatusBar>
          <Pane $w={138} />
          <Pane $w={54} />
          <Pane $w={26} />
          <Pane $w={26} />
          <Pane $w={26} />
        </StatusBar>

        <Wizard />
      </Window>
      <Watermark>Screencast-O-Matic.com</Watermark>
    </>
  );
}
